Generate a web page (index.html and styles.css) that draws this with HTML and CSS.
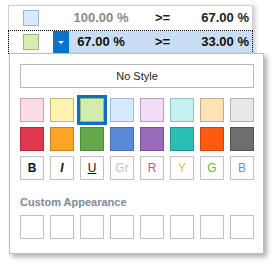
FILE: index.html
```html
<!DOCTYPE html>
<html>
<head>
<meta charset="utf-8">
<link rel="stylesheet" href="styles.css">
</head>
<body>
<div class="grid">
  <div class="row">
    <div class="c-sw"><span class="sw sw-blue"></span></div>
    <div class="c-btn"></div>
    <div class="c-v1 muted">100.00 %</div>
    <div class="c-op">&gt;=</div>
    <div class="c-v2">67.00 %</div>
  </div>
  <div class="row row-sel">
    <div class="c-sw"><span class="sw sw-green"></span></div>
    <div class="c-btn drop"><svg width="6" height="3" viewBox="0 0 6 3"><polygon points="0,0 6,0 3,3" fill="#fff"/></svg></div>
    <div class="c-v1 hl">67.00 %</div>
    <div class="c-op hl">&gt;=</div>
    <div class="c-v2 hl">33.00 %</div>
  </div>
</div>

<div class="popup">
  <div class="nostyle">No Style</div>
  <div class="swatches">
    <span class="box l1"></span>
    <span class="box l2"></span>
    <span class="box l3 selected"></span>
    <span class="box l4"></span>
    <span class="box l5"></span>
    <span class="box l6"></span>
    <span class="box l7"></span>
    <span class="box l8"></span>

    <span class="box d1"></span>
    <span class="box d2"></span>
    <span class="box d3"></span>
    <span class="box d4"></span>
    <span class="box d5"></span>
    <span class="box d6"></span>
    <span class="box d7"></span>
    <span class="box d8"></span>

    <span class="box txt t-b">B</span>
    <span class="box txt t-i">I</span>
    <span class="box txt t-u">U</span>
    <span class="box txt t-gr">Gr</span>
    <span class="box txt t-r">R</span>
    <span class="box txt t-y">Y</span>
    <span class="box txt t-g">G</span>
    <span class="box txt t-bl">B</span>
  </div>
  <div class="section">Custom Appearance</div>
  <div class="swatches custom">
    <span class="box"></span>
    <span class="box"></span>
    <span class="box"></span>
    <span class="box"></span>
    <span class="box"></span>
    <span class="box"></span>
    <span class="box"></span>
    <span class="box"></span>
  </div>
</div>
</body>
</html>
```

FILE: styles.css
```css
html, body {
  margin: 0;
  padding: 0;
  background: #fff;
}
body {
  font-family: "Liberation Sans", Arial, sans-serif;
  color: #1e1e1e;
}

.grid {
  margin: 5px 0 0 8px;
  width: 243px;
  border: 1px solid #cfcfcf;
  border-bottom: none;
  box-shadow: 3px 1px 4px rgba(0, 0, 0, 0.18);
  height: 48px;
}

.row {
  display: grid;
  grid-template-columns: 44px 16px 64px 40px 1fr;
  height: 24px;
  font-size: 13px;
  font-weight: bold;
  line-height: 24px;
}

.row-sel {
  margin: 0 -1px;
  height: 22px;
  line-height: 22px;
  border: 1px dotted #000;
}

.c-sw {
  display: flex;
  align-items: center;
  padding-left: 14px;
}

.sw {
  display: block;
  width: 14px;
  height: 14px;
}
.sw-blue {
  background: #d8eafb;
  border: 1px solid #9db6cd;
}
.sw-green {
  background: #d4edb2;
  border: 1px solid #9bb87c;
}

.c-btn.drop {
  background: #0a73c8;
  display: flex;
  align-items: center;
  justify-content: center;
}
.c-btn.drop svg {
  display: block;
  margin-top: 1px;
}

.c-v1 {
  text-align: center;
}
.c-op {
  padding-left: 22px;
}
.c-v2 {
  text-align: right;
  padding-right: 3px;
}
.muted {
  color: #8a8a8a;
}
.hl {
  background: #c9ddf4;
  color: #111;
}

.popup {
  position: absolute;
  left: 9px;
  top: 53px;
  width: 233px;
  padding: 10px 10px 14px 10px;
  background: #fff;
  border: 1px solid #bdbdbd;
  box-shadow: 3px 3px 5px rgba(0, 0, 0, 0.32);
}

.nostyle {
  height: 22px;
  width: 232px;
  border: 1px solid #b9b9b9;
  font-size: 11px;
  line-height: 22px;
  text-align: center;
  color: #1e1e1e;
}

.swatches {
  margin-top: 10px;
  display: grid;
  grid-template-columns: repeat(8, 24px);
  grid-auto-rows: 24px;
  column-gap: 6px;
  row-gap: 5px;
}

.box {
  box-sizing: border-box;
  display: block;
  width: 24px;
  height: 24px;
  border: 1px solid #c0c0c0;
  background: #fff;
}

.selected {
  outline: 3px solid #0a72c6;
}

.l1 { background: #fddde3; border-color: #c9a2aa; }
.l2 { background: #fff3b0; border-color: #c5b57c; }
.l3 { background: #d2ecb0; border-color: #9cba7e; }
.l4 { background: #d7eafd; border-color: #a0b9d1; }
.l5 { background: #f3dcf5; border-color: #b89cba; }
.l6 { background: #c3f1ef; border-color: #8ec2bf; }
.l7 { background: #fee3b6; border-color: #c6ab85; }
.l8 { background: #e8e8e8; border-color: #b2b2b2; }

.d1 { background: #e0384f; border-color: #b42a3d; }
.d2 { background: #fea526; border-color: #c98220; }
.d3 { background: #63a84b; border-color: #4c8a38; }
.d4 { background: #5a8bd7; border-color: #4570b4; }
.d5 { background: #9b6bbb; border-color: #7a5397; }
.d6 { background: #2bbeb7; border-color: #1f9892; }
.d7 { background: #ff5b10; border-color: #c9460a; }
.d8 { background: #6e6e6e; border-color: #525252; }

.txt {
  font-size: 12px;
  line-height: 22px;
  text-align: center;
}
.t-b { font-weight: bold; color: #111; }
.t-i { font-weight: bold; font-style: italic; color: #111; }
.t-u { text-decoration: underline; color: #111; }
.t-gr { color: #c2c2c2; }
.t-r { color: #e8457a; }
.t-y { color: #f2b541; }
.t-g { color: #6cb24b; }
.t-bl { color: #5f8fdf; }

.section {
  margin-top: 16px;
  height: 13px;
  font-size: 11px;
  line-height: 13px;
  font-weight: bold;
  color: #7d8a98;
}

.custom {
  margin-top: 6px;
}
```
